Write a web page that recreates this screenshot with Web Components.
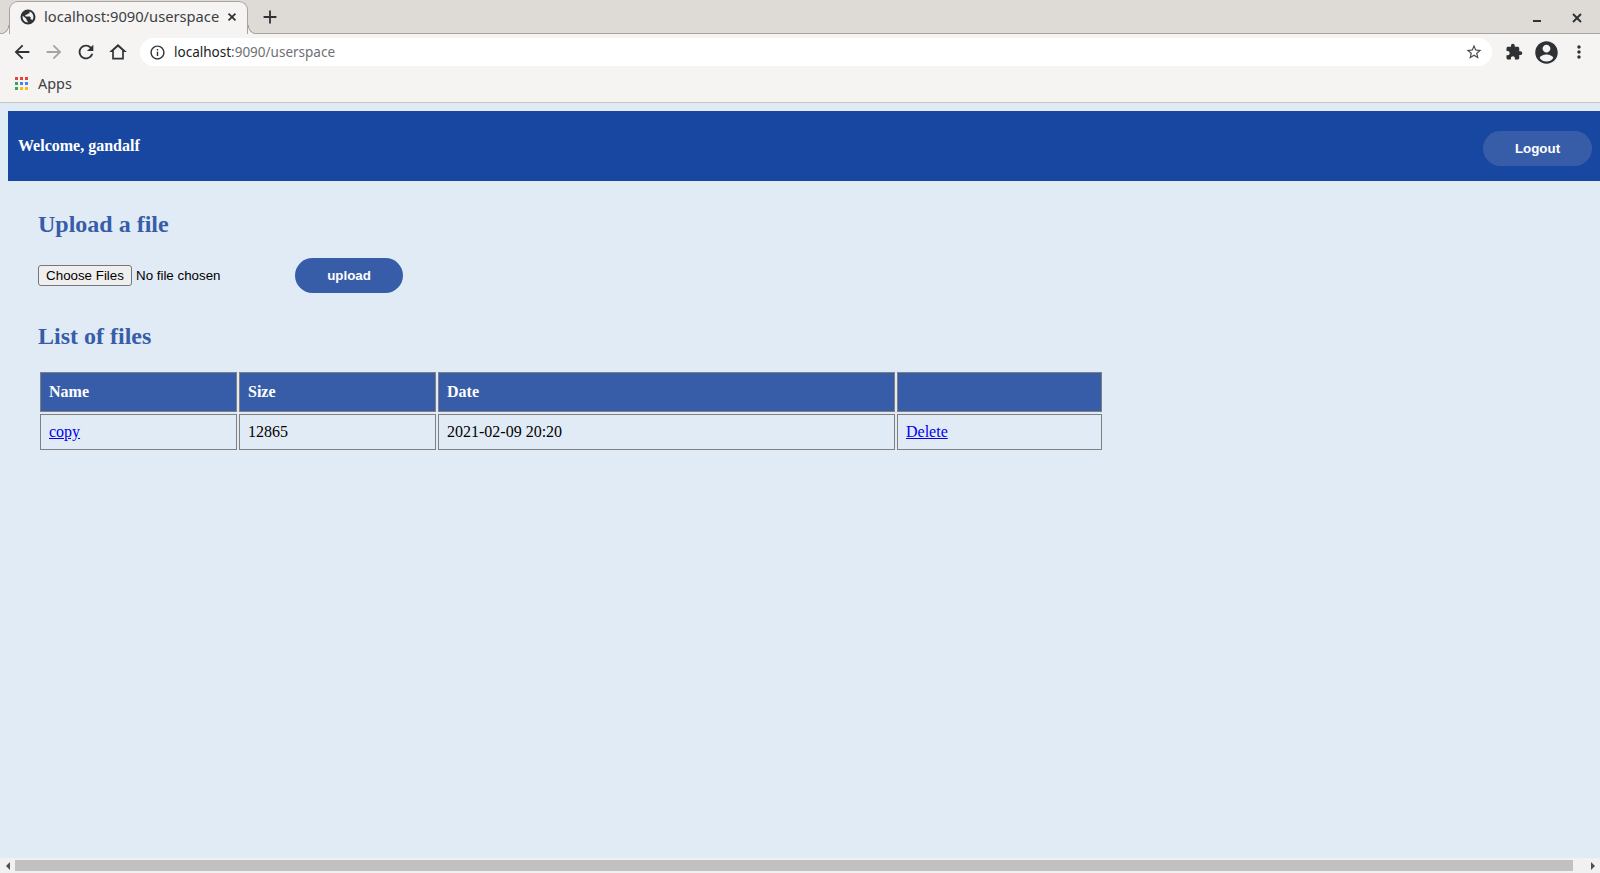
<!DOCTYPE html>
<html>
<head>
<meta charset="utf-8">
<title>localhost:9090/userspace</title>
<style>
  html, body { margin: 0; height: 100%; overflow: hidden; }
  body { font-family: "Liberation Serif", serif; }
</style>
</head>
<body>
<browser-window>
  <user-page>
    <welcome-bar name="gandalf"></welcome-bar>
    <upload-section></upload-section>
    <file-list></file-list>
  </user-page>
</browser-window>

<script>
const ICONS = {
  globe: "M12 2a10 10 0 1 0 0 20a10 10 0 1 0 0-20z M5 10.2l5 4.6v1.4l1.5 1.5v1.6c-3.6-.3-6.700-3.400-6.700-7 0-.6.100-1.300.2-1.900z M14 4.800c3 .9 5.200 3.700 5.200 7.200 0 1.700-.6 3.200-1.500 4.400-.5-.8-1.200-1.300-2.200-1.400v-2.600l-1.200-1.200H8.500V9h2.200l1.500-1.800h1.800z",
  back: "M20 11H7.83l5.59-5.59L12 4l-8 8 8 8 1.41-1.41L7.83 13H20v-2z",
  forward: "M4 11h12.17l-5.59-5.59L12 4l8 8-8 8-1.41-1.41L16.17 13H4v-2z",
  reload: "M17.65 6.35A7.958 7.958 0 0 0 12 4c-4.42 0-7.99 3.58-7.99 8s3.57 8 7.99 8c3.73 0 6.84-2.55 7.73-6h-2.08A5.99 5.99 0 0 1 12 18c-3.31 0-6-2.69-6-6s2.69-6 6-6c1.66 0 3.14.69 4.22 1.78L13 11h7V4l-2.35 2.35z",
  home: "M12 2.500L1.500 12H5v9h14v-9h3.500zM17 19H7v-8.800l5-4.500 5 4.500z",
  star: "M22 9.24l-7.19-.62L12 2 9.19 8.63 2 9.24l5.46 4.73L5.82 21 12 17.27 18.18 21l-1.63-7.03L22 9.24zM12 15.4l-3.76 2.27 1-4.28-3.32-2.88 4.38-.38L12 6.1l1.71 4.04 4.38.38-3.32 2.88 1 4.28L12 15.4z",
  puzzle: "M20.5 11H19V7c0-1.1-.9-2-2-2h-4V3.5C13 2.12 11.88 1 10.5 1S8 2.12 8 3.5V5H4c-1.1 0-1.99.9-1.99 2v3.8H3.5c1.49 0 2.7 1.21 2.7 2.7s-1.21 2.7-2.7 2.7H2V20c0 1.1.9 2 2 2h3.8v-1.5c0-1.49 1.21-2.7 2.7-2.7 1.49 0 2.7 1.21 2.7 2.7V22H17c1.1 0 2-.9 2-2v-4h1.5c1.38 0 2.5-1.12 2.5-2.5S21.88 11 20.5 11z",
  account: "M12 2C6.48 2 2 6.48 2 12s4.48 10 10 10 10-4.48 10-10S17.52 2 12 2zm0 3c1.93 0 3.5 1.57 3.5 3.5S13.93 12 12 12s-3.5-1.57-3.5-3.5S10.07 5 12 5zm0 15c-2.5 0-4.71-1.28-6-3.22.03-1.99 4-3.08 6-3.08s5.97 1.09 6 3.08C16.71 18.72 14.5 20 12 20z",
  dots: "M12 8c1.1 0 2-.9 2-2s-.9-2-2-2-2 .9-2 2 .9 2 2 2zm0 2c-1.1 0-2 .9-2 2s.9 2 2 2 2-.9 2-2-.9-2-2-2zm0 6c-1.1 0-2 .9-2 2s.9 2 2 2 2-.9 2-2-.9-2-2-2z",
  info: "M11 7h2v2h-2zm0 4h2v6h-2zm1-9C6.48 2 2 6.48 2 12s4.48 10 10 10 10-4.48 10-10S17.52 2 12 2zm0 18c-4.41 0-8-3.59-8-8s3.59-8 8-8 8 3.59 8 8-3.59 8-8 8z",
  plus: "M19 13h-6v6h-2v-6H5v-2h6V5h2v6h6v2z",
  close: "M19 7.100L16.900 5 12 9.900 7.100 5 5 7.100 9.900 12 5 16.900 7.100 19 12 14.100 16.900 19 19 16.900 14.100 12z"
};

class UiIcon extends HTMLElement {
  connectedCallback() {
    const size = this.getAttribute("size") || 20;
    this.attachShadow({mode: "open"}).innerHTML = `
      <style>
        :host { display: inline-flex; align-items: center; justify-content: center; color: var(--icon, #2f3235); }
        svg { display: block; fill: currentColor; fill-rule: evenodd; }
      </style>
      <svg width="${size}" height="${size}" viewBox="0 0 24 24"><path d="${ICONS[this.getAttribute("name")]}"/></svg>`;
  }
}
customElements.define("ui-icon", UiIcon);

class BrowserTab extends HTMLElement {
  constructor() {
    super();
    this.attachShadow({mode: "open"}).innerHTML = `
      <style>
        :host {
          display: flex; align-items: center; box-sizing: border-box; position: relative;
          width: 239px; height: 33px; margin-left: 9px; padding: 0 8px 2px 9px;
          background: #f5f4f2; border: 1px solid #a8a5a1; border-bottom: 0;
          border-radius: 9px 9px 0 0; font: 14.7px "Noto Sans", sans-serif; color: #3c4043;
        }
        /* flared bottom corners of the active tab */
        :host::before, :host::after { content: ""; position: absolute; bottom: 0; width: 9px; height: 9px; }
        :host::before { left: -10px; background: radial-gradient(circle at 0 0, transparent 8px, #a8a5a1 8.5px, #a8a5a1 9px, #f5f4f2 9.5px); }
        :host::after { right: -10px; background: radial-gradient(circle at 100% 0, transparent 8px, #a8a5a1 8.5px, #a8a5a1 9px, #f5f4f2 9.5px); }
        ui-icon { margin-right: 7px; }
        span { flex: 1; white-space: nowrap; overflow: hidden; margin-bottom: 2px; }
      </style>
      <ui-icon name="globe" size="18"></ui-icon>
      <span><slot></slot></span>
      <ui-icon name="close" size="14" style="margin:0"></ui-icon>`;
  }
}
customElements.define("browser-tab", BrowserTab);

class BrowserChrome extends HTMLElement {
  constructor() {
    super();
    this.attachShadow({mode: "open"}).innerHTML = `
      <style>
        :host { display: block; flex: none; background: #f5f4f2; font-family: "Noto Sans", sans-serif; }
        .strip { display: flex; align-items: flex-end; height: 34px; box-sizing: border-box; background: #dedbd7; border-bottom: 1px solid #a8a5a1; padding-top: 1px; }
        .strip browser-tab { margin-bottom: -1px; }
        .new { margin: 0 0 5px 10px; width: 24px; }
        .spacer { flex: 1; }
        .win { width: 40px; margin-bottom: 7px; }
        .win.min { display: flex; justify-content: center; margin-bottom: 11px; }
        .win.last { margin-right: 3px; }
        .toolbar { display: flex; align-items: center; height: 36px; padding: 0 6px; }
        .btn { width: 32px; height: 32px; display: flex; align-items: center; justify-content: center; }
        .url {
          flex: 1; height: 28px; margin: 0 6px; display: flex; align-items: center;
          background: #fff; border-radius: 14px; padding: 0 9px 0 9px;
          font-size: 13.5px; color: #6e7074;
        }
        .url b { font-weight: 400; color: #202124; }
        .url .addr { flex: 1; margin-left: 8px; }
        .marks { display: flex; align-items: center; height: 33px; box-sizing: border-box; border-bottom: 1px solid #c9c5bf; padding: 0 0 6px 15px; font-size: 14.4px; color: #3c4043; }
        .marks svg { margin-right: 10px; display: block; }
        .minus { width: 8px; height: 2px; background: #2f3235; }
      </style>
      <div class="strip">
        <browser-tab>localhost:9090/userspace</browser-tab>
        <ui-icon class="new" name="plus" size="22"></ui-icon>
        <div class="spacer"></div>
        <div class="win min"><div class="minus"></div></div>
        <ui-icon class="win last" name="close" size="16"></ui-icon>
      </div>
      <div class="toolbar">
        <div class="btn"><ui-icon name="back" size="22"></ui-icon></div>
        <div class="btn"><ui-icon name="forward" size="22" style="--icon:#a3a4a6"></ui-icon></div>
        <div class="btn"><ui-icon name="reload" size="22"></ui-icon></div>
        <div class="btn"><ui-icon name="home" size="20"></ui-icon></div>
        <div class="url">
          <ui-icon name="info" size="17"></ui-icon>
          <span class="addr"><b>localhost</b>:9090/userspace</span>
          <ui-icon name="star" size="18" style="--icon:#4a4c4f"></ui-icon>
        </div>
        <div class="btn"><ui-icon name="puzzle" size="18"></ui-icon></div>
        <div class="btn"><ui-icon name="account" size="27"></ui-icon></div>
        <div class="btn"><ui-icon name="dots" size="20" style="margin-left:1px"></ui-icon></div>
      </div>
      <div class="marks">
        <svg width="13" height="13" viewBox="0 0 13 13">
          <rect width="3" height="3" fill="#ea4335"/><rect x="5" width="3" height="3" fill="#ea4335"/><rect x="10" width="3" height="3" fill="#ea4335"/>
          <rect y="5" width="3" height="3" fill="#34a853"/><rect x="5" y="5" width="3" height="3" fill="#4285f4"/><rect x="10" y="5" width="3" height="3" fill="#4285f4"/>
          <rect y="10" width="3" height="3" fill="#34a853"/><rect x="5" y="10" width="3" height="3" fill="#fbbc04"/><rect x="10" y="10" width="3" height="3" fill="#fbbc04"/>
        </svg>
        Apps
      </div>`;
  }
}
customElements.define("browser-chrome", BrowserChrome);

class HScrollbar extends HTMLElement {
  constructor() {
    super();
    this.attachShadow({mode: "open"}).innerHTML = `
      <style>
        :host { display: flex; align-items: center; flex: none; height: 15px; background: #f1f1f1; }
        .arrow { width: 15px; display: flex; justify-content: center; }
        .left { width: 0; height: 0; border: 4px solid transparent; border-left: 0; border-right: 4px solid #505050; }
        .right { width: 0; height: 0; border: 4px solid transparent; border-right: 0; border-left: 4px solid #505050; }
        .thumb { flex: 1; height: 11px; margin-right: 12px; background: #c1c1c1; }
      </style>
      <div class="arrow"><div class="left"></div></div>
      <div class="thumb"></div>
      <div class="arrow"><div class="right"></div></div>`;
  }
}
customElements.define("h-scrollbar", HScrollbar);

class BrowserWindow extends HTMLElement {
  constructor() {
    super();
    this.attachShadow({mode: "open"}).innerHTML = `
      <style>
        :host { display: flex; flex-direction: column; height: 100vh; background: #e1ebf6; }
        .viewport { flex: 1; overflow: hidden; padding: 8px 0 0 8px; }
      </style>
      <browser-chrome></browser-chrome>
      <div class="viewport"><slot></slot></div>
      <h-scrollbar></h-scrollbar>`;
  }
}
customElements.define("browser-window", BrowserWindow);

class UserPage extends HTMLElement {
  constructor() {
    super();
    this.attachShadow({mode: "open"}).innerHTML = `
      <style>
        :host { display: block; color: #000; font: 16px "Liberation Serif", serif; }
      </style>
      <slot></slot>`;
  }
}
customElements.define("user-page", UserPage);

class WelcomeBar extends HTMLElement {
  connectedCallback() {
    this.attachShadow({mode: "open"}).innerHTML = `
      <style>
        :host {
          display: flex; align-items: center; justify-content: space-between; box-sizing: border-box;
          height: 70px; padding: 0 8px 0 10px; background: #1847a1; color: #fff;
        }
        strong { font-size: 16px; margin-top: -1px; }
        button {
          width: 109px; height: 35px; margin-top: 4px; border: 0; border-radius: 18px;
          background: #375da9; color: #fff; font: bold 13.33px "Liberation Sans", sans-serif;
        }
      </style>
      <strong>Welcome, ${this.getAttribute("name")}</strong>
      <button>Logout</button>`;
  }
}
customElements.define("welcome-bar", WelcomeBar);

class UploadSection extends HTMLElement {
  constructor() {
    super();
    this.attachShadow({mode: "open"}).innerHTML = `
      <style>
        :host { display: block; padding: 0 0 0 30px; }
        h2 { margin: 30px 0 0; font-size: 24px; line-height: 27px; color: #375da9; }
        form { display: flex; align-items: center; margin-top: 20px; height: 35px; font: 13.33px "Liberation Sans", sans-serif; }
        .pick {
          box-sizing: border-box; width: 94px; height: 21px; padding: 0; background: #efefef;
          border: 1px solid #767676; border-radius: 3px; color: #000; font: inherit;
        }
        .status { width: 159px; margin-left: 4px; white-space: nowrap; }
        .send {
          width: 108px; height: 35px; border: 0; border-radius: 18px;
          background: #375da9; color: #fff; font: bold 13.33px "Liberation Sans", sans-serif;
        }
      </style>
      <h2>Upload a file</h2>
      <form>
        <button type="button" class="pick">Choose Files</button>
        <span class="status">No file chosen</span>
        <button type="button" class="send">upload</button>
      </form>`;
  }
}
customElements.define("upload-section", UploadSection);

class FileList extends HTMLElement {
  constructor() {
    super();
    this.attachShadow({mode: "open"}).innerHTML = `
      <style>
        :host { display: block; padding-left: 30px; }
        h2 { margin: 30px 0 0; font-size: 24px; line-height: 27px; color: #375da9; }
        table { margin: 20px 0 0 0; width: 1066px; table-layout: fixed; border-collapse: separate; border-spacing: 2px; }
        th, td { box-sizing: border-box; border: 1px solid #808080; padding: 0 8px; text-align: left; }
        th { height: 40px; background: #375da9; color: #fff; }
        td { height: 36px; }
        a { color: #00e; }
      </style>
      <h2>List of files</h2>
      <table>
        <colgroup><col style="width:197px"><col style="width:197px"><col style="width:457px"><col style="width:205px"></colgroup>
        <thead><tr><th>Name</th><th>Size</th><th>Date</th><th></th></tr></thead>
        <tbody><tr>
          <td><a href="#">copy</a></td>
          <td>12865</td>
          <td>2021-02-09 20:20</td>
          <td><a href="#">Delete</a></td>
        </tr></tbody>
      </table>`;
  }
}
customElements.define("file-list", FileList);
</script>
</body>
</html>
